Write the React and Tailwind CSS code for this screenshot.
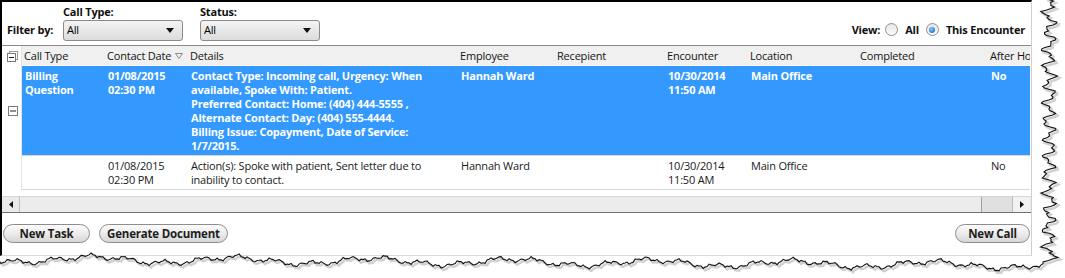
import React from "react";

const font = { fontFamily: '"Open Sans", "Noto Sans", Arial, sans-serif' };

// torn paper edge, generated once
const rightX = (y) => 1049 + 5 * Math.sin(y * 0.35) + 3 * Math.sin(y * 0.83 + 1.3) + 1.5 * Math.sin(y * 2.1 + 0.4) + 0.8 * Math.sin(y * 4.3);
const bottomY = (x) => 259 + x * 0.006 + 3 * Math.sin(x * 0.045 + 0.5) + 2 * Math.sin(x * 0.17 + 2) + 1.2 * Math.sin(x * 0.6) + 0.6 * Math.sin(x * 1.7);

function edgePoints() {
  const pts = [];
  for (let y = -2; y <= 262; y += 1.5) pts.push([rightX(y), y]);
  const cx = rightX(262);
  for (let x = cx; x >= -4; x -= 2) pts.push([x, bottomY(x)]);
  return pts;
}
const EDGE = edgePoints();
const edgeStr = EDGE.map(([x, y]) => `${x.toFixed(1)},${y.toFixed(1)}`).join(" ");
const outsidePoly = `${edgeStr} -4,282 1070,282 1070,-4`;
const shadowStr = EDGE.map(([x, y]) => `${(x + 2).toFixed(1)},${(y + 2).toFixed(1)}`).join(" ");

const COLS = "grid-cols-[83px_83px_270px_97px_110px_83px_110px_130px_120px]";

function Select() {
  return (
    <div className="flex h-[21px] w-[120px] items-center justify-between rounded-[3px] border border-[#8a8a8a] bg-gradient-to-b from-[#f4f4f4] to-[#dcdcdc] pl-[3px] pr-[8px] text-black">
      <span>All</span>
      <svg width="8" height="5" viewBox="0 0 8 5"><path d="M0 0h8L4 5z" fill="#111" /></svg>
    </div>
  );
}

function Radio({ checked }) {
  return (
    <span className="flex h-[13px] w-[13px] items-center justify-center rounded-full border border-[#8f9091] bg-gradient-to-b from-[#e6e6e6] to-[#fafafa]">
      {checked && <span className="h-[6px] w-[6px] rounded-full bg-[radial-gradient(circle_at_40%_35%,#7ec3ff,#0d5eb8)]" />}
    </span>
  );
}

function Minus({ stacked }) {
  return (
    <svg width="11" height="11" viewBox="0 0 11 11">
      {stacked && <rect x="2.5" y="0.5" width="8" height="8" fill="#fff" stroke="#9a9a9a" />}
      <rect x="0.5" y={stacked ? 2.5 : 0.5} width={stacked ? 8 : 9} height={stacked ? 8 : 9} fill="#fff" stroke="#7a7a7a" />
      <path d={stacked ? "M2 6.5h5" : "M2 5h6"} stroke="#222" />
    </svg>
  );
}

function Btn({ children, className }) {
  return (
    <button className={`flex h-[19px] items-center justify-center rounded-full border border-[#8d8d8d] bg-gradient-to-b from-[#fbfbfb] via-[#ececec] to-[#d6d6d6] text-[11.5px] font-bold tracking-[-0.2px] text-[#1e1e1e] ${className}`}>
      {children}
    </button>
  );
}

const row1 = [
  ["Billing", "Question"],
  ["01/08/2015", "02:30 PM"],
  [
    "Contact Type: Incoming call, Urgency: When",
    "available, Spoke With: Patient.",
    "Preferred Contact: Home: (404) 444-5555 ,",
    "Alternate Contact: Day: (404) 555-4444.",
    "Billing Issue: Copayment, Date of Service:",
    "1/7/2015.",
  ],
  ["Hannah Ward"],
  [],
  ["10/30/2014", "11:50 AM"],
  ["Main Office"],
  [],
  ["No"],
];

const row2 = [
  [],
  ["01/08/2015", "02:30 PM"],
  ["Action(s): Spoke with patient, Sent letter due to", "inability to contact."],
  ["Hannah Ward"],
  [],
  ["10/30/2014", "11:50 AM"],
  ["Main Office"],
  [],
  ["No"],
];

const headers = ["Call Type", "Contact Date", "Details", "Employee", "Recepient", "Encounter", "Location", "Completed", "After Hours"];

function Cells({ cells }) {
  return cells.map((lines, i) => (
    <div key={i} className="overflow-hidden whitespace-nowrap pl-[3px]">
      {lines.map((l) => (
        <div key={l} className="leading-[14px]">{l}</div>
      ))}
    </div>
  ));
}

export default function App() {
  return (
    <div className="relative h-[278px] w-[1065px] overflow-hidden bg-white text-[11px] tracking-[-0.2px]" style={font}>
      <div className="flex h-[256px] w-[1032px] flex-col border-l-2 border-r border-t-2 border-b border-l-black border-r-[#cfcfcf] border-t-black border-b-[#dadada]">
        {/* filter bar */}
        <div className="flex h-[44px] shrink-0 items-end border-b border-[#8a8a8a] pb-[4px]">
          <span className="mb-[3px] ml-[5px] w-[56px] font-bold text-[#111]">Filter by:</span>
          <div className="flex flex-col">
            <span className="mb-[1px] font-bold leading-[15px] text-[#111]">Call Type:</span>
            <Select />
          </div>
          <div className="ml-[17px] flex flex-col">
            <span className="mb-[1px] font-bold leading-[15px] text-[#111]">Status:</span>
            <Select />
          </div>
          <div className="mb-[3px] ml-auto mr-[6px] flex items-center font-bold text-[#111]">
            <span className="mr-[5px]">View:</span>
            <Radio />
            <span className="ml-[7px] mr-[7px]">All</span>
            <Radio checked />
            <span className="ml-[7px]">This Encounter</span>
          </div>
        </div>

        {/* grid */}
        <div className="flex shrink-0">
          <div className="flex w-[20px] shrink-0 flex-col items-center border-r border-[#e4e4e4]">
            <div className="flex h-[20px] items-center pl-[2px]"><Minus stacked /></div>
            <div className="flex h-[90px] items-center pl-[3px]"><Minus /></div>
          </div>
          <div className="w-[1008px] overflow-hidden">
            <div className={`grid ${COLS} h-[20px] items-center border-b border-white bg-[#f0f0f0] pt-[1px] text-[#141414]`}>
              {headers.map((h) => (
                <div key={h} className="flex items-center whitespace-nowrap pl-[2px]">
                  {h}
                  {h === "Contact Date" && (
                    <svg className="ml-[4px]" width="8" height="6" viewBox="0 0 8 6"><path d="M0.5 0.5h7L4 5.5z" fill="none" stroke="#8a8a8a" /></svg>
                  )}
                </div>
              ))}
            </div>
            <div className={`grid ${COLS} h-[90px] border-b border-[#d8d8d8] bg-[#3399ff] pt-[3px] font-bold text-white`}>
              <Cells cells={row1} />
            </div>
            <div className={`grid ${COLS} h-[34px] border-b border-[#d8d8d8] pt-[3px] text-[#1a1a1a]`}>
              <Cells cells={row2} />
            </div>
          </div>
        </div>

        {/* horizontal scrollbar */}
        <div className="mt-[6px] flex h-[17px] shrink-0 border-b border-t border-b-[#707070] border-t-[#d6d6d6] bg-[#eaeaea]">
          <div className="flex w-[18px] items-center justify-center border-r border-[#bdbdbd]">
            <svg width="4" height="7" viewBox="0 0 4 7"><path d="M4 0v7L0 3.5z" fill="#111" /></svg>
          </div>
          <div className="w-[962px] border-r border-[#9d9d9d] bg-[#ececec]" />
          <div className="w-[30px] bg-[#e0e0e0]" />
          <div className="flex w-[18px] items-center justify-center border-l border-[#bdbdbd] bg-[#f2f2f2]">
            <svg width="4" height="7" viewBox="0 0 4 7"><path d="M0 0v7L4 3.5z" fill="#111" /></svg>
          </div>
        </div>

        {/* buttons */}
        <div className="flex flex-1 items-start pt-[11px]">
          <Btn className="ml-[1px] w-[87px]">New Task</Btn>
          <Btn className="ml-[9px] w-[129px]">Generate Document</Btn>
          <Btn className="ml-auto mr-[1px] w-[75px]">New Call</Btn>
        </div>
      </div>

      {/* torn paper edge */}
      <svg className="pointer-events-none absolute left-0 top-0" width="1065" height="278" viewBox="0 0 1065 278">
        <polygon points={outsidePoly} fill="#fff" />
        <polyline points={shadowStr} fill="none" stroke="#9a9a9a" strokeWidth="2.5" opacity="0.45" />
        <polyline points={edgeStr} fill="none" stroke="#111" strokeWidth="1.1" />
      </svg>
    </div>
  );
}
